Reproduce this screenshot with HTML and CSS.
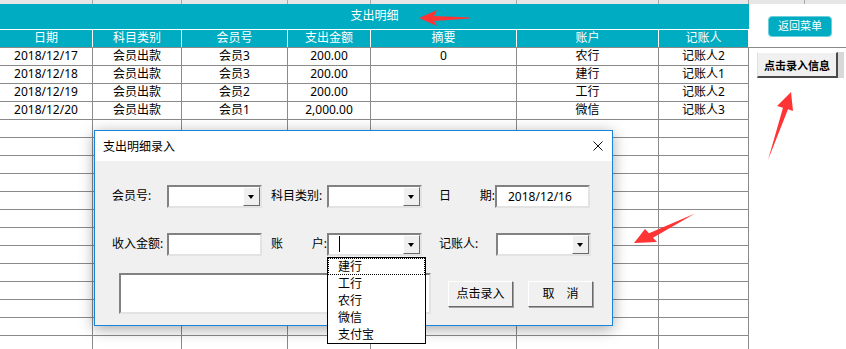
FILE: index.html
```html
<!DOCTYPE html>
<html lang="zh-CN">

<head>
    <meta charset="UTF-8">
    <meta name="viewport" content="width=device-width, initial-scale=1.0">
    <title>支出明细</title>
    <link rel="stylesheet" href="styles.css">
</head>

<body>
    <div class="page">
        <div class="sheet">
            <div class="row strip">
                <div></div><div></div><div></div><div></div><div></div><div></div><div></div>
            </div>
            <div class="title">支出明细</div>
            <div class="row head">
                <div>日期</div><div>科目类别</div><div>会员号</div><div>支出金额</div><div>摘要</div><div>账户</div><div>记账人</div>
            </div>
            <div class="row">
                <div>2018/12/17</div><div>会员出款</div><div>会员3</div><div>200.00</div><div>0</div><div>农行</div><div>记账人2</div>
            </div>
            <div class="row">
                <div>2018/12/18</div><div>会员出款</div><div>会员3</div><div>200.00</div><div></div><div>建行</div><div>记账人1</div>
            </div>
            <div class="row">
                <div>2018/12/19</div><div>会员出款</div><div>会员2</div><div>200.00</div><div></div><div>工行</div><div>记账人2</div>
            </div>
            <div class="row">
                <div>2018/12/20</div><div>会员出款</div><div>会员1</div><div>2,000.00</div><div></div><div>微信</div><div>记账人3</div>
            </div>
            <div id="emptyRows"></div>
        </div>

        <div class="side">
            <div class="side-strip"><span></span></div>
            <div class="side-top">
                <div class="menu-btn">返回菜单</div>
            </div>
            <div class="side-body">
                <div class="entry-btn">点击录入信息</div>
            </div>
        </div>
    </div>

    <div class="dialog">
        <div class="dlg-title">
            <span>支出明细录入</span>
            <svg width="10" height="10" viewBox="0 0 10 10">
                <path d="M0.5 0.5L9.5 9.5M9.5 0.5L0.5 9.5" stroke="#111" stroke-width="1" fill="none" />
            </svg>
        </div>
        <div class="dlg-body">
            <div class="frow">
                <div class="lb">会员号:</div>
                <div class="box combo"><span class="drop"></span></div>
                <div class="lb lb2">科目类别:</div>
                <div class="box combo"><span class="drop"></span></div>
                <div class="lb lb3 split"><span>日</span><span>期:</span></div>
                <div class="box date">2018/12/16</div>
            </div>
            <div class="frow row2">
                <div class="lb">收入金额:</div>
                <div class="box"></div>
                <div class="lb lb2 split"><span>账</span><span>户:</span></div>
                <div class="box combo"><span class="caret"></span><span class="drop"></span></div>
                <div class="lb lb3 wide">记账人:</div>
                <div class="box combo"><span class="drop"></span></div>
            </div>
            <div class="frow row3">
                <div class="box memo"></div>
                <div class="btn first">点击录入</div>
                <div class="btn">取&emsp;消</div>
            </div>
        </div>

        <ul class="droplist">
            <li class="focus">建行</li>
            <li>工行</li>
            <li>农行</li>
            <li>微信</li>
            <li>支付宝</li>
        </ul>
    </div>

    <svg class="arrows" width="846" height="349" viewBox="0 0 846 349">
        <polygon points="419,18 437,10 434,16 470,17.5 470,18.5 434,21 437,26" />
        <polygon points="791,92 793,111 788,109.3 768,160 783,107.7 777,106" />
        <polygon points="634,243 645,229 649,233.3 695,213.5 653,237.7 657,242" />
    </svg>

    <script>
        const emptyRows = document.getElementById('emptyRows');
        for (let i = 0; i < 13; i++) {
            const row = document.createElement('div');
            row.className = 'row';
            row.innerHTML = '<div></div>'.repeat(7);
            emptyRows.appendChild(row);
        }
    </script>
</body>

</html>
```

FILE: styles.css
```css
* {
    box-sizing: border-box;
}

html,
body {
    margin: 0;
    padding: 0;
}

body {
    position: relative;
    width: 846px;
    height: 349px;
    overflow: hidden;
    background: #fff;
    font-family: "Noto Sans", "Noto Sans CJK SC", sans-serif;
    font-size: 12px;
    color: #000;
}

.page {
    display: flex;
    height: 349px;
    overflow: hidden;
}

/* sheet */

.sheet {
    width: 749px;
}

.row {
    display: grid;
    grid-template-columns: 93px 89px 106px 83px 146px 142px 90px;
    height: 18px;
    border-top: 1px solid #8a8a8a;
}

.row > div {
    border-right: 1px solid #8a8a8a;
    text-align: center;
    line-height: 16px;
    white-space: nowrap;
}

.strip {
    height: 4px;
    border-top: 0;
    background: #e6e6e6;
}

.strip > div {
    border-right-color: #a8a8a8;
}

.title {
    height: 25px;
    background: #00acc1;
    color: #fff;
    text-align: center;
    line-height: 24px;
}

.head {
    background: #00acc1;
    color: #fff;
    border-top-color: #fff;
}

.head > div {
    border-right-color: #fff;
}

/* right side */

.side {
    flex: 1;
}

.side-strip {
    display: flex;
    height: 4px;
    background: #e6e6e6;
}

.side-strip span {
    width: 56px;
    border-right: 1px solid #a8a8a8;
}

.side-top {
    height: 43px;
    padding: 12px 0 0 19px;
}

.menu-btn {
    width: 64px;
    height: 21px;
    background: #00acc1;
    border: 1px solid #6ccfdb;
    border-radius: 4px;
    color: #fff;
    font-size: 11px;
    line-height: 18px;
    text-align: center;
}

.side-body {
    border-top: 1px solid #8a8a8a;
    padding: 4px 0 0 8px;
}

.entry-btn {
    width: 81px;
    height: 26px;
    background: #f0f0f0;
    border: 1px solid;
    border-color: #fff #4a4a4a #4a4a4a #e0e0e0;
    border-width: 1px 2px 2px 1px;
    box-shadow: 6px 0 0 #d8d8d8;
    font-size: 11px;
    font-weight: bold;
    line-height: 25px;
    text-align: center;
}

/* dialog */

.dialog {
    position: absolute;
    left: 94px;
    top: 130px;
    width: 519px;
    height: 196px;
    background: #f0f0f0;
    border: 1px solid #1a84d8;
    box-shadow: 0 3px 14px rgba(0, 0, 0, 0.35);
}

.dlg-title {
    display: flex;
    align-items: center;
    justify-content: space-between;
    height: 30px;
    padding: 0 9px 0 8px;
    background: #fff;
}

.dlg-body {
    padding: 24px 0 0 17px;
}

.frow {
    display: flex;
    height: 23px;
}

.row2 {
    margin-top: 25px;
}

.row3 {
    height: 41px;
    margin-top: 17px;
}

.lb {
    width: 55px;
    line-height: 22px;
    white-space: nowrap;
}

.lb2 {
    width: 56px;
    margin-left: 9px;
}

.lb3 {
    width: 56px;
    margin-left: 17px;
}

.lb3.wide {
    width: 57px;
}

.split {
    display: flex;
    justify-content: space-between;
}

.box {
    position: relative;
    width: 95px;
    height: 23px;
    background: #fff;
    border: 2px solid;
    border-color: #828282 #e3e3e3 #e3e3e3 #828282;
}

.date {
    padding-left: 11px;
    line-height: 19px;
    font-size: 12px;
}

.drop {
    position: absolute;
    right: 0;
    top: 0;
    width: 17px;
    height: 19px;
    background: #f0f0f0;
    border: 1px solid;
    border-color: #fff #6a6a6a #6a6a6a #fff;
}

.drop::after {
    content: "";
    position: absolute;
    left: 4px;
    top: 7px;
    border-left: 3.5px solid transparent;
    border-right: 3.5px solid transparent;
    border-top: 4px solid #000;
}

.caret {
    position: absolute;
    left: 10px;
    top: 1px;
    width: 1px;
    height: 16px;
    background: #000;
}

.memo {
    width: 312px;
    height: 41px;
    margin-left: 7px;
}

.btn {
    width: 65px;
    height: 26px;
    margin-top: 8px;
    margin-left: 15px;
    background: #f0f0f0;
    border: 1px solid;
    border-color: #fff #6a6a6a #6a6a6a #fff;
    box-shadow: 1px 1px 0 #a0a0a0;
    line-height: 23px;
    text-align: center;
}

.btn.first {
    margin-left: 17px;
}

.droplist {
    position: absolute;
    left: 232px;
    top: 126px;
    width: 99px;
    height: 87px;
    margin: 0;
    padding: 0;
    list-style: none;
    background: #fff;
    border: 1px solid #000;
}

.droplist li {
    height: 17px;
    padding-left: 10px;
    line-height: 17px;
}

.droplist li.focus {
    padding-left: 9px;
    border: 1px dotted #000;
    line-height: 15px;
}

.arrows {
    position: absolute;
    left: 0;
    top: 0;
    pointer-events: none;
}

.arrows polygon {
    fill: #ff3535;
}
```
